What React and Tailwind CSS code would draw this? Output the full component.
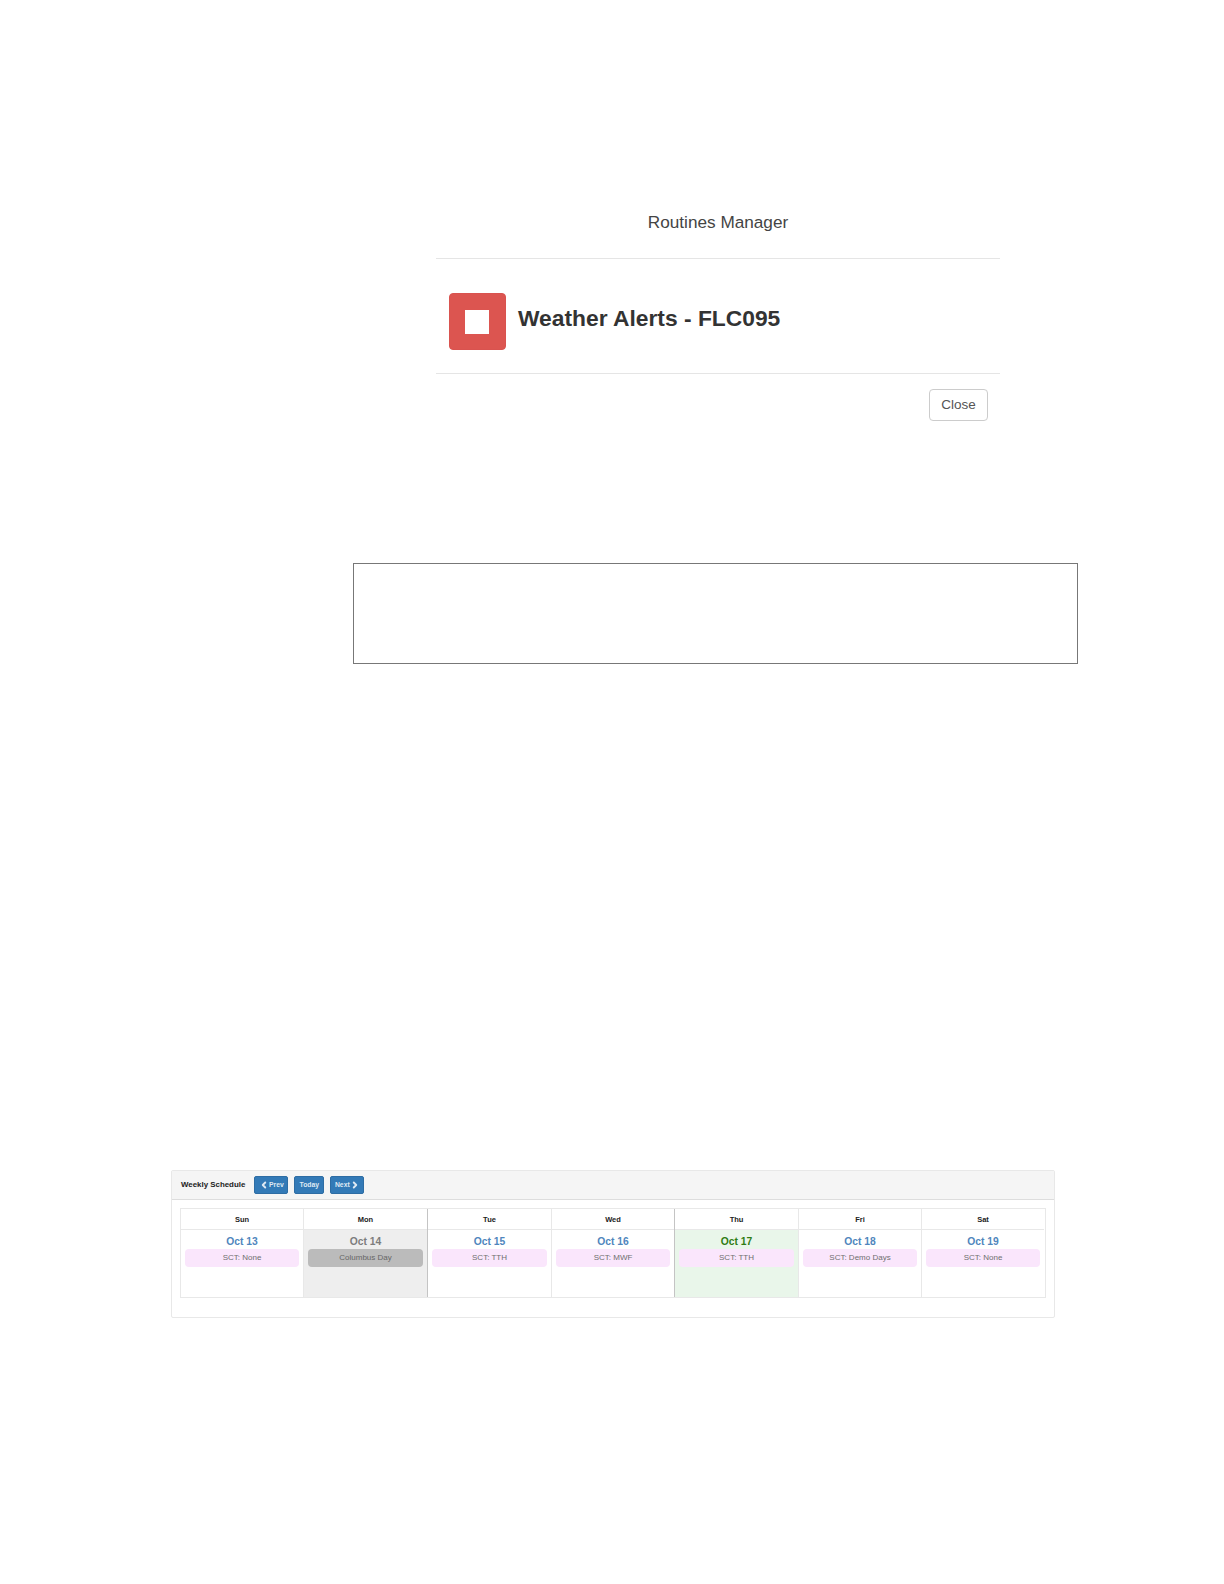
import { ChevronLeft, ChevronRight } from 'lucide-react'

const days = [
  { name: 'Sun', date: 'Oct 13', label: 'SCT: None', border: 'border-[#e8e8e8]' },
  { name: 'Mon', date: 'Oct 14', label: 'Columbus Day', holiday: true, border: 'border-[#c4c4c4]' },
  { name: 'Tue', date: 'Oct 15', label: 'SCT: TTH', border: 'border-[#e8e8e8]' },
  { name: 'Wed', date: 'Oct 16', label: 'SCT: MWF', border: 'border-[#c4c4c4]' },
  { name: 'Thu', date: 'Oct 17', label: 'SCT: TTH', today: true, border: 'border-[#e8e8e8]' },
  { name: 'Fri', date: 'Oct 18', label: 'SCT: Demo Days', border: 'border-[#e8e8e8]' },
  { name: 'Sat', date: 'Oct 19', label: 'SCT: None', border: 'border-transparent' },
]

function DayColumn({ day }) {
  let bodyBg = 'bg-white'
  let dateColor = 'text-[#4f86bd]'
  let pill = 'bg-[#fae6fc] text-[#6f6f6f]'
  if (day.holiday) {
    bodyBg = 'bg-[#eeeeee]'
    dateColor = 'text-[#7d7d7d]'
    pill = 'bg-[#bbbbbb] text-[#666666]'
  }
  if (day.today) {
    bodyBg = 'bg-[#e9f6ea]'
    dateColor = 'text-[#2f7d12]'
  }

  return (
    <div className={`flex flex-col border-r ${day.border}`}>
      <div className="flex h-[21px] items-center justify-center border-b border-[#e8e8e8] pt-[1px] text-[7.5px] font-bold text-[#222222]">
        {day.name}
      </div>
      <div className={`flex flex-1 flex-col px-[4px] ${bodyBg}`}>
        <div className={`mt-[5px] text-center text-[10.3px] leading-[13px] font-bold ${dateColor}`}>
          {day.date}
        </div>
        <div className={`mt-[1px] flex h-[18px] items-center justify-center rounded-[4px] text-[8px] ${pill}`}>
          {day.label}
        </div>
      </div>
    </div>
  )
}

function NavButton({ children, className }) {
  return (
    <button className={`flex h-[18px] items-center justify-center rounded-[2px] border border-[#2e6da4] bg-[#337ab7] text-[6.8px] font-bold text-[#dfe9f3] ${className}`}>
      {children}
    </button>
  )
}

export default function App() {
  return (
    <div className="h-[1584px] overflow-hidden bg-white pt-[208px] font-['Liberation_Sans',Arial,sans-serif] text-[#333333]">
      <div className="ml-[436px] w-[564px]">
        <div className="h-[51px] border-b border-[#e5e5e5] text-center text-[17.2px] leading-[28px] text-[#444444]">
          Routines Manager
        </div>
        <div className="flex h-[115px] items-center border-b border-[#e5e5e5] pt-[11px] pl-[13px]">
          <div className="flex h-[57px] w-[57px] items-center justify-center rounded-[4px] border border-[#d9534f] bg-[#dc5550]">
            <div className="mr-[1px] h-[24px] w-[24px] bg-white" />
          </div>
          <div className="mb-[6px] ml-[12px] text-[22.8px] font-bold">Weather Alerts - FLC095</div>
        </div>
        <div className="flex justify-end pt-[15px] pr-[12px]">
          <button className="h-[32px] w-[59px] rounded-[4px] border border-[#cccccc] bg-white text-[13.5px] text-[#555555]">
            Close
          </button>
        </div>
      </div>

      <div className="mt-[142px] ml-[353px] h-[101px] w-[725px] border border-[#777777]" />

      <div className="mt-[506px] ml-[171px] h-[148px] w-[884px] rounded-[2px] border border-[#e8e8e8]">
        <div className="flex h-[29px] items-center border-b border-[#dddddd] bg-[#f5f5f5] pl-[9px]">
          <span className="text-[7.9px] font-bold text-[#222222]">Weekly Schedule</span>
          <NavButton className="ml-[9px] w-[34px]">
            <ChevronLeft size={10} strokeWidth={4.5} />
            Prev
          </NavButton>
          <NavButton className="ml-[6px] w-[30px]">Today</NavButton>
          <NavButton className="ml-[6px] w-[34px]">
            Next
            <ChevronRight size={10} strokeWidth={4.5} />
          </NavButton>
        </div>
        <div className="px-[8px] pt-[8px]">
          <div className="grid h-[90px] grid-cols-[123px_124px_124px_123px_124px_123px_1fr] border border-[#e8e8e8]">
            {days.map((day) => (
              <DayColumn key={day.name} day={day} />
            ))}
          </div>
        </div>
      </div>
    </div>
  )
}
